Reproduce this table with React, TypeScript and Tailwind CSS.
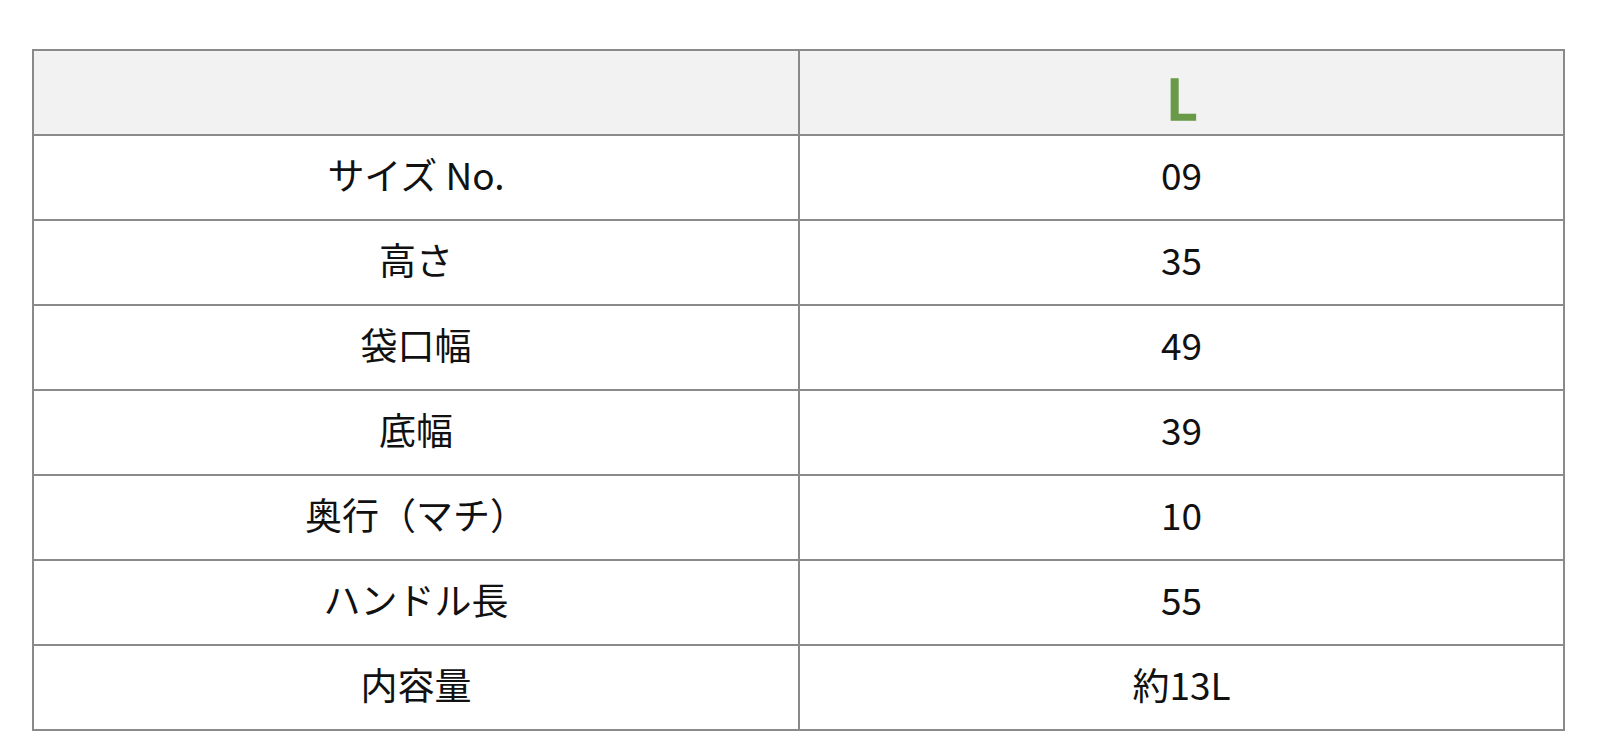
import React from "react";

const rows: [string, string][] = [
  ["サイズ No.", "09"],
  ["高さ", "35"],
  ["袋口幅", "49"],
  ["底幅", "39"],
  ["奥行（マチ）", "10"],
  ["ハンドル長", "55"],
  ["内容量", "約13L"],
];

export default function App() {
  return (
    <div
      className="w-[1600px] h-[738px] bg-white pt-[49px] pl-[32px]"
      style={{ fontFamily: '"Noto Sans CJK JP", "Noto Sans", sans-serif' }}
    >
      <table className="w-[1531px] border-collapse table-fixed text-[37px] text-[#111111]">
        <colgroup>
          <col className="w-[766px]" />
          <col className="w-[765px]" />
        </colgroup>
        <thead>
          <tr className="h-[85px] bg-[#f2f2f2]">
            <th className="border-2 border-[#8a8a8a]"></th>
            <th className="border-2 border-[#8a8a8a] text-center align-middle pt-[8px]">
              <span className="inline-block text-[56px] leading-[70px] font-medium text-[#6a9a48] [-webkit-text-stroke:1.5px_#6a9a48]">
                L
              </span>
            </th>
          </tr>
        </thead>
        <tbody>
          {rows.map(([k, v]) => (
            <tr key={k} className="h-[85px]">
              <td className="border-2 border-[#8a8a8a] text-center align-middle leading-none pb-[6px]">{k}</td>
              <td className="border-2 border-[#8a8a8a] text-center align-middle leading-none pb-[6px]">{v}</td>
            </tr>
          ))}
        </tbody>
      </table>
    </div>
  );
}
